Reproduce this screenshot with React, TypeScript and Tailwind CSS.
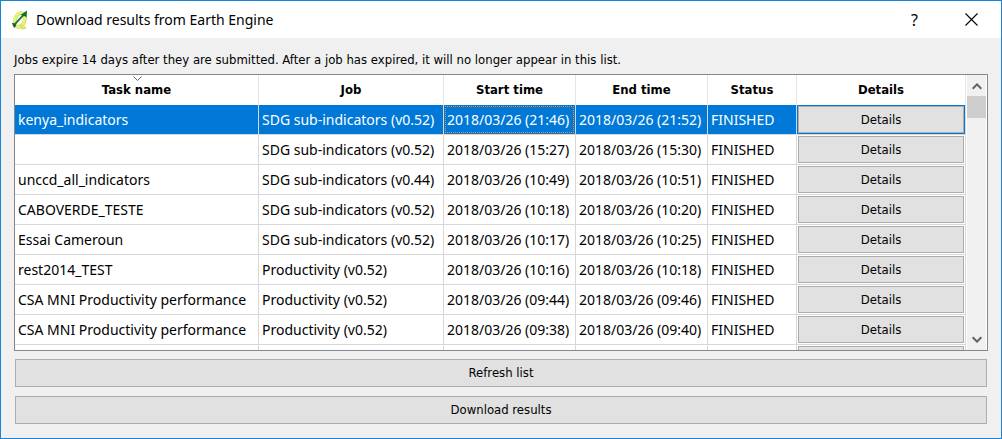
import React from "react";

type Job = { task: string; job: string; start: string; end: string };

const jobs: Job[] = [
  { task: "kenya_indicators", job: "SDG sub-indicators (v0.52)", start: "2018/03/26 (21:46)", end: "2018/03/26 (21:52)" },
  { task: "", job: "SDG sub-indicators (v0.52)", start: "2018/03/26 (15:27)", end: "2018/03/26 (15:30)" },
  { task: "unccd_all_indicators", job: "SDG sub-indicators (v0.44)", start: "2018/03/26 (10:49)", end: "2018/03/26 (10:51)" },
  { task: "CABOVERDE_TESTE", job: "SDG sub-indicators (v0.52)", start: "2018/03/26 (10:18)", end: "2018/03/26 (10:20)" },
  { task: "Essai Cameroun", job: "SDG sub-indicators (v0.52)", start: "2018/03/26 (10:17)", end: "2018/03/26 (10:25)" },
  { task: "rest2014_TEST", job: "Productivity (v0.52)", start: "2018/03/26 (10:16)", end: "2018/03/26 (10:18)" },
  { task: "CSA MNI Productivity performance", job: "Productivity (v0.52)", start: "2018/03/26 (09:44)", end: "2018/03/26 (09:46)" },
  { task: "CSA MNI Productivity performance", job: "Productivity (v0.52)", start: "2018/03/26 (09:38)", end: "2018/03/26 (09:40)" },
];

function AppIcon() {
  return (
    <svg width="18" height="20" viewBox="0 0 18 20" aria-hidden="true">
      <ellipse cx="8.8" cy="10" rx="4.8" ry="7.2" transform="rotate(18 8.8 10)" fill="none" stroke="#c3d348" strokeWidth="3.6" />
      <ellipse cx="8.6" cy="9.8" rx="4.8" ry="7.2" transform="rotate(18 8.6 9.8)" fill="none" stroke="#e9f27c" strokeWidth="2.6" />
      <path d="M9.5 14l2 4.2 3.4-1" fill="none" stroke="#d6e45e" strokeWidth="2.6" />
      <path d="M3.4 14.6L13 4.4" stroke="#1f7a35" strokeWidth="2" />
      <path d="M16 .6l-.4 7-2.1-1.7-4-1z" fill="#126b28" />
      <path d="M.8 12.8l3.2 1 1.2 2-2.2 2.2z" fill="#1c5a2c" />
    </svg>
  );
}

function Chevron({ down = false }: { down?: boolean }) {
  return (
    <svg width="10" height="8" viewBox="0 0 10 8" aria-hidden="true">
      <path d={down ? "M.7 1.2L5 5.6 9.3 1.2" : "M.7 6.8L5 2.4 9.3 6.8"} fill="none" stroke="#606060" strokeWidth="2" />
    </svg>
  );
}

const head = "relative border-r border-[#e5e5e5] p-0 text-center font-bold";
const cell = "overflow-hidden whitespace-nowrap border-r border-b border-[#d8d8d8] py-0 pr-0 pl-[3px]";
const push = "block w-full border border-[#adadad] bg-[#e1e1e1] text-center text-[13px] leading-5 text-black";

export default function App() {
  return (
    <div className="flex h-screen flex-col border border-[#1883d7] bg-[#f0f0f0] font-['DejaVu_Sans_Condensed','DejaVu_Sans',sans-serif] text-[13px] text-black">
      <header className="flex h-[37px] shrink-0 items-center bg-white pl-[10px]">
        <AppIcon />
        <h1 className="ml-[7px] flex-1 font-['Noto_Sans',sans-serif] text-sm">Download results from Earth Engine</h1>
        <button aria-label="Help" className="h-full w-[57px] font-['Noto_Sans',sans-serif] text-base">?</button>
        <button aria-label="Close" className="flex h-full w-[56px] items-center justify-center">
          <svg width="13" height="13" viewBox="0 0 13 13" aria-hidden="true">
            <path d="M.5.5l12 12M12.5.5l-12 12" stroke="#000" strokeWidth="1.1" />
          </svg>
        </button>
        <span className="w-0.5" />
      </header>

      <main className="flex min-h-0 flex-1 flex-col px-[13px] pb-[14px]">
        <p className="mt-3 mb-1 leading-5">
          Jobs expire 14 days after they are submitted. After a job has expired, it will no longer appear in this list.
        </p>

        <div className="flex min-h-0 flex-1 border border-[#828790] bg-white">
          <div className="min-w-0 flex-1 overflow-hidden">
            <table className="w-full table-fixed border-separate border-spacing-0">
              <colgroup>
                <col className="w-[244px]" />
                <col className="w-[185px]" />
                <col className="w-[132px]" />
                <col className="w-[132px]" />
                <col className="w-[89px]" />
                <col />
              </colgroup>
              <thead>
                <tr className="h-[30px]">
                  <th className={head}>
                    Task name
                    <svg className="absolute top-[1px] left-[118px]" width="9" height="6" viewBox="0 0 9 6" aria-hidden="true">
                      <path d="M.5.5l4 4 4-4" fill="none" stroke="#6b6b6b" />
                    </svg>
                  </th>
                  <th className={head}>Job</th>
                  <th className={head}>Start time</th>
                  <th className={head}>End time</th>
                  <th className={head}>Status</th>
                  <th className={head}>Details</th>
                </tr>
              </thead>
              <tbody className="font-['Noto_Sans',sans-serif] text-sm">
                {jobs.map((j, i) => (
                  <tr key={i} className={i === 0 ? "h-[30px] bg-[#0078d7] text-white" : "h-[30px]"}>
                    <td className={cell}>{j.task}</td>
                    <td className={cell}>{j.job}</td>
                    {i === 0 ? (
                      <td className="border-r border-b border-[#d8d8d8] p-px">
                        <div className="flex h-[27px] items-center overflow-hidden border border-dotted border-[#ff8728] pl-px whitespace-nowrap">{j.start}</div>
                      </td>
                    ) : (
                      <td className={cell}>{j.start}</td>
                    )}
                    <td className={cell}>{j.end}</td>
                    <td className={cell}>FINISHED</td>
                    <td className="border-r border-b border-[#d8d8d8] p-px font-['DejaVu_Sans_Condensed','DejaVu_Sans',sans-serif]">
                      <button className={push + " h-[27px]"}>Details</button>
                    </td>
                  </tr>
                ))}
                <tr className="h-[30px]">
                  <td className={cell} />
                  <td className={cell} />
                  <td className={cell} />
                  <td className={cell} />
                  <td className={cell} />
                  <td className="border-r border-b border-[#d8d8d8] p-px">
                    <button aria-label="Details" className={push + " h-[27px]"} />
                  </td>
                </tr>
              </tbody>
            </table>
          </div>
          <div className="flex w-[21px] shrink-0 flex-col border-x border-white bg-[#f0f0f0]">
            <button aria-label="Scroll up" className="flex h-[21px] items-center justify-center"><Chevron /></button>
            <div className="h-[22px] bg-[#cdcdcd]" />
            <div className="flex-1" />
            <button aria-label="Scroll down" className="flex h-[21px] items-center justify-center"><Chevron down /></button>
          </div>
        </div>

        <div className="mt-2 flex flex-col gap-[9px] px-px">
          <button className={push + " h-7"}>Refresh list</button>
          <button className={push + " h-7"}>Download results</button>
        </div>
      </main>
    </div>
  );
}
